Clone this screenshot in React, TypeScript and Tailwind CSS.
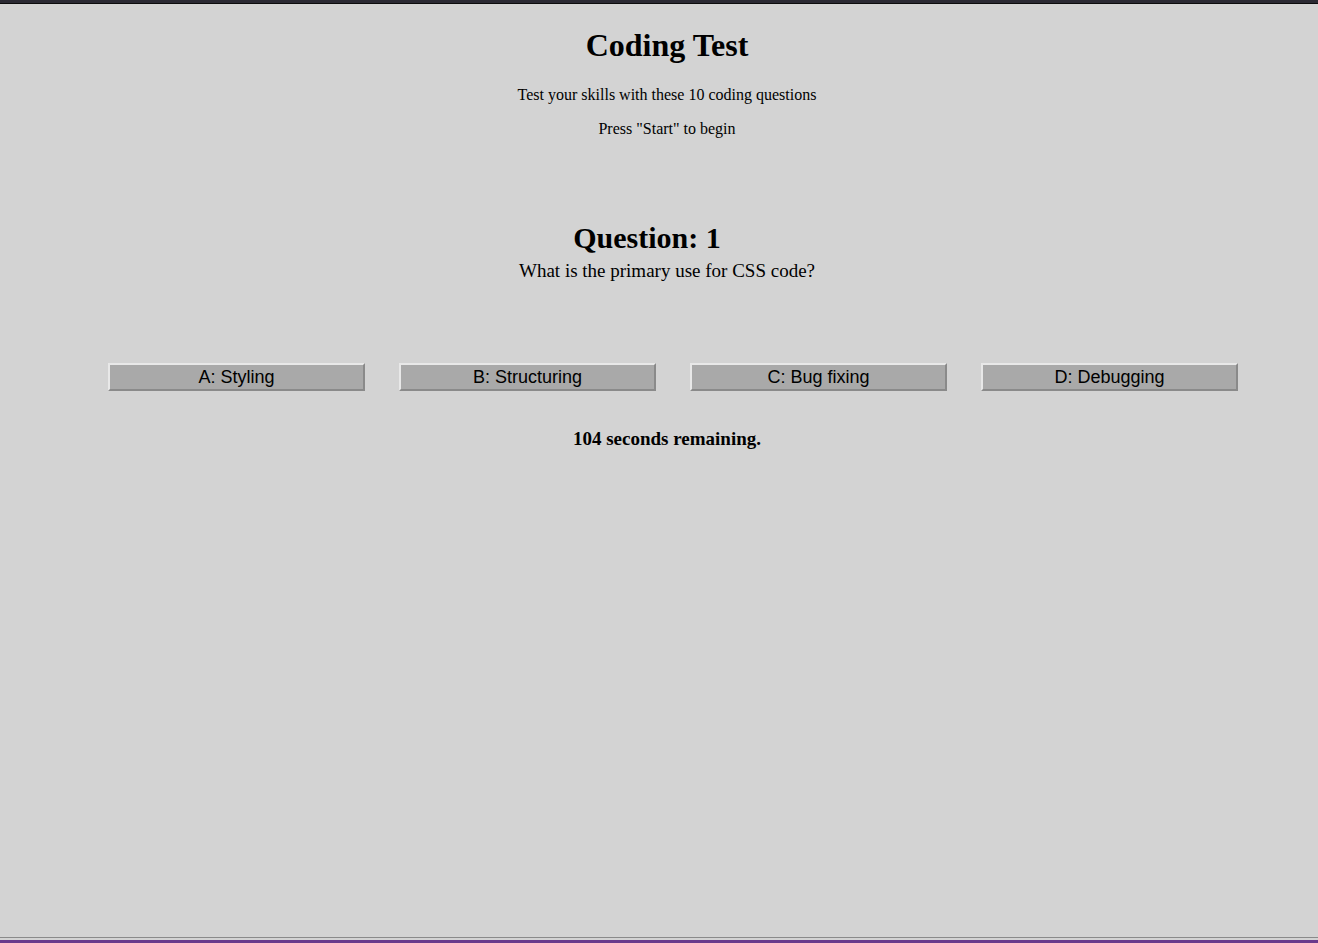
import React from "react";

const answers = ["A: Styling", "B: Structuring", "C: Bug fixing", "D: Debugging"];

export default function App() {
  return (
    <div className="min-h-[943px] h-[943px] flex flex-col bg-[#d3d3d3] text-black overflow-hidden" style={{ fontFamily: '"Liberation Serif", "Times New Roman", serif' }}>
      <div className="h-[3px] bg-[#2b2a33] shrink-0" />
      <div className="h-[1px] bg-[#0c0c0d] shrink-0" />
      <main className="flex-1 flex flex-col">
        <header className="flex flex-col items-center pl-[16px]">
          <h1 className="text-[32px] font-bold leading-none mt-[25px]">Coding Test</h1>
          <p className="text-[16px] leading-none mt-[26px]">Test your skills with these 10 coding questions</p>
          <p className="text-[16px] leading-none mt-[18px]">Press "Start" to begin</p>
        </header>
        <section className="flex flex-col items-center pl-[16px] mt-[86px]">
          <h2 className="text-[30px] font-bold leading-none pr-[40px]">Question: 1</h2>
          <p className="text-[19px] leading-none mt-[8px]">What is the primary use for CSS code?</p>
        </section>
        <div className="flex gap-[34px] pl-[108px] mt-[83px]">
          {answers.map((a) => (
            <button
              key={a}
              className="w-[257px] h-[28px] bg-[#a9a9a9] border-2 border-t-[#e8e8e8] border-l-[#e8e8e8] border-r-[#8a8a8a] border-b-[#8a8a8a] text-[18px] leading-none text-black"
              style={{ fontFamily: '"Liberation Sans", Tahoma, Arial, sans-serif' }}
            >
              {a}
            </button>
          ))}
        </div>
        <p className="text-[19px] font-bold leading-none text-center pl-[16px] mt-[38px]">104 seconds remaining.</p>
      </main>
      <div className="h-[1px] bg-[#8a8a8a] shrink-0" />
      <div className="h-[2px] bg-[#d3d3d3] shrink-0" />
      <div className="h-[3px] bg-[#6a3a8c] shrink-0" />
    </div>
  );
}
